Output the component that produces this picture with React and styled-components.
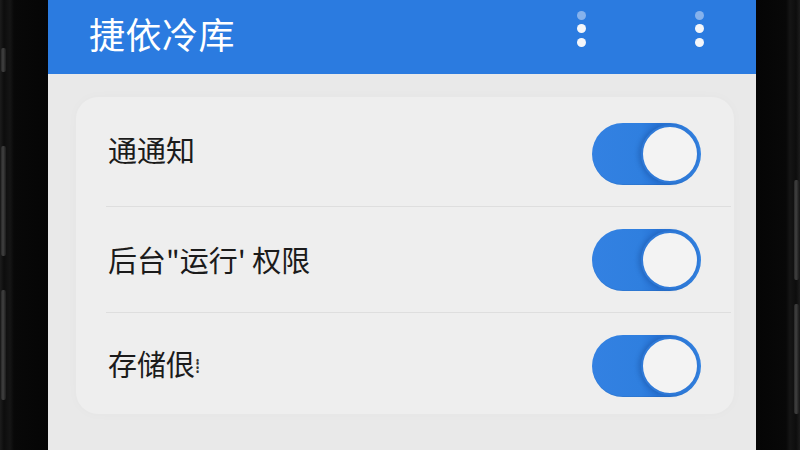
import React from 'react';
import styled, { createGlobalStyle } from 'styled-components';

const GlobalStyle = createGlobalStyle`
	html, body {
		margin: 0;
		padding: 0;
		width: 800px;
		height: 450px;
		overflow: hidden;
		background: #0a0a0a;
		font-family: 'Noto Sans CJK SC', 'Noto Sans', sans-serif;
	}
`;

const Phone = styled.div`
	display: flex;
	width: 800px;
	height: 450px;
	background: #0b0b0b;
`;

const Bezel = styled.div`
	width: ${props => props.width}px;
	display: flex;
	flex-direction: column;
	align-items: ${props => (props.side === 'left' ? 'flex-start' : 'flex-end')};
	gap: 14px;
	padding: 0 ${props => (props.side === 'left' ? '0 0 1px' : '1px 0 0')};
	background: linear-gradient(
		${props => (props.side === 'left' ? '90deg' : '270deg')},
		#1c1c1c 0px,
		#0d0d0d 4px,
		#151515 10px,
		#080808 14px,
		#050505 100%
	);
`;

const SideKey = styled.div`
	width: 5px;
	height: ${props => props.h}px;
	margin-top: ${props => props.top || 0}px;
	border-radius: 2px;
	background: linear-gradient(90deg, #2a2a2a, #4a4a4a 40%, #1e1e1e);
	opacity: 0.85;
`;

const Screen = styled.div`
	flex: 1;
	display: flex;
	flex-direction: column;
	background: #e9e9e9;
`;

const Header = styled.header`
	height: 74px;
	flex-shrink: 0;
	display: flex;
	align-items: center;
	padding: 0 52px 0 41px;
	background: #2b7be0;
	box-sizing: border-box;
`;

const Title = styled.h1`
	flex: 1;
	margin: 0 0 8px;
	font-size: 36px;
	font-weight: 400;
	color: #ffffff;
	letter-spacing: 0.5px;
`;

const MenuDots = styled.div`
	display: flex;
	flex-direction: column;
	gap: 4.5px;
	margin-left: ${props => props.gap}px;
	margin-bottom: 17px;
`;

const Dot = styled.span`
	width: 9px;
	height: 9px;
	border-radius: 50%;
	background: ${props => (props.faded ? '#86b2ec' : '#f4f6fa')};
`;

const Card = styled.section`
	margin: 23px 22px 0 28px;
	padding-top: 4px;
	height: 317px;
	box-sizing: border-box;
	border-radius: 22px;
	background: #eeeeee;
	box-shadow: 0 0 12px rgba(0, 0, 0, 0.025);
`;

const Row = styled.div`
	height: 105px;
	display: flex;
	align-items: center;
	margin-left: 30px;
	margin-right: 3px;
	padding: 0 30px 0 2px;
	border-bottom: ${props => (props.last ? 'none' : '1px solid #dedede')};
`;

const Label = styled.span`
	flex: 1;
	font-size: 29px;
	color: #1b1b1b;
	margin-bottom: ${props => props.lift || 0}px;
`;

const Tail = styled.span`
	font-size: 19px;
	vertical-align: 3px;
	color: #333;
`;

const Track = styled.div`
	width: 109px;
	height: 62px;
	box-sizing: border-box;
	border-radius: 31px;
	padding: 2px;
	display: flex;
	justify-content: flex-end;
	background: linear-gradient(90deg, #3381e2 0%, #2f7fdf 45%, #2874d6 60%, #3384e3 100%);
	box-shadow: inset 0 -1px 0 rgba(0, 0, 0, 0.06);
`;

const Knob = styled.div`
	width: 58px;
	height: 58px;
	box-sizing: border-box;
	border-radius: 50%;
	border: 2px solid #2f7ad8;
	background: #f3f3f3;
	box-shadow: -3px 0 4px rgba(10, 50, 120, 0.25);
`;

const Toggle = () => (
	<Track>
		<Knob />
	</Track>
);

const Menu = ({ gap }) => (
	<MenuDots gap={gap}>
		<Dot faded />
		<Dot />
		<Dot />
	</MenuDots>
);

const settings = [
	{ label: '通通知', lift: 10 },
	{ label: '后台"运行\' 权限', lift: 2 },
	{ label: '存储佷', tail: '⁞', lift: 6 },
];

const App = () => (
	<>
		<GlobalStyle />
		<Phone>
			<Bezel side="left" width={47}>
				<SideKey h={24} top={48} />
				<SideKey h={110} top={60} />
				<SideKey h={110} top={20} />
			</Bezel>
			<Screen>
				<Header>
					<Title>捷依冷库</Title>
					<Menu gap={0} />
					<Menu gap={109} />
				</Header>
				<Card>
					{settings.map((item, i) => (
						<Row key={item.label} last={i === settings.length - 1}>
							<Label lift={item.lift}>
								{item.label}
								{item.tail && <Tail>{item.tail}</Tail>}
							</Label>
							<Toggle />
						</Row>
					))}
				</Card>
			</Screen>
			<Bezel side="right" width={43}>
				<SideKey h={100} top={180} />
				<SideKey h={110} top={10} />
			</Bezel>
		</Phone>
	</>
);

export default App;
